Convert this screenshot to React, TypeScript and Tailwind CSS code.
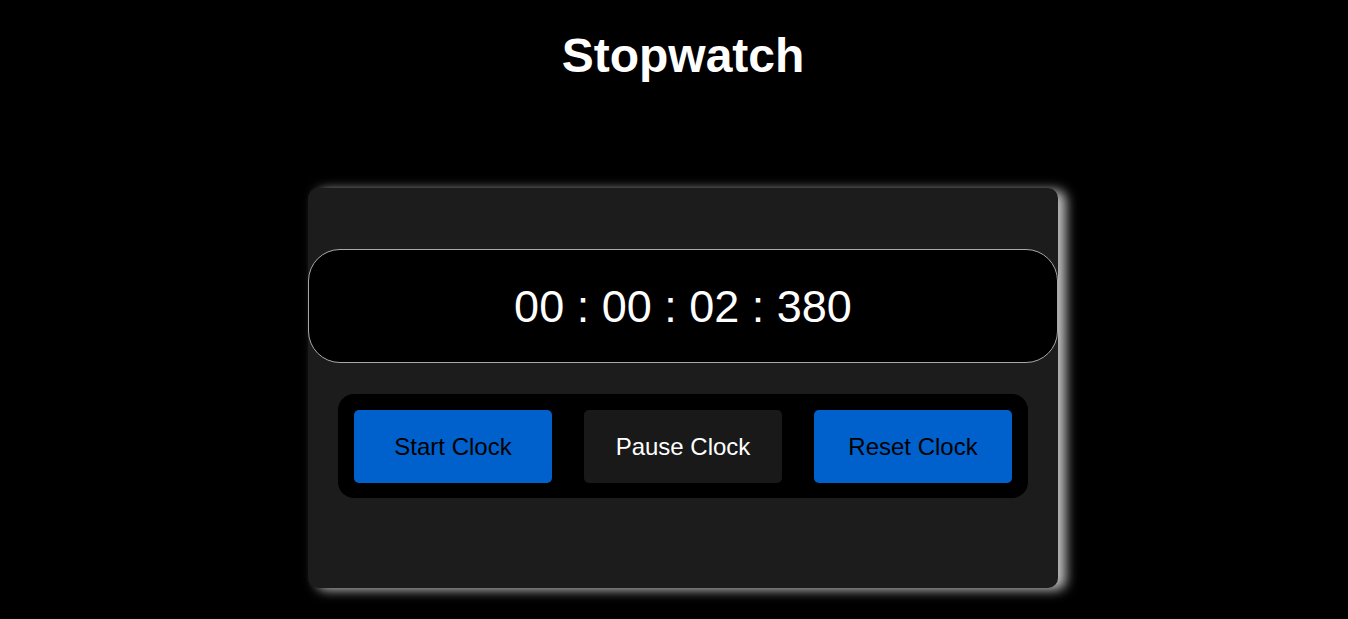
export default function App() {
  const buttons = [
    { label: "Start Clock", cls: "bg-[#0060cc] text-black" },
    { label: "Pause Clock", cls: "bg-[#191919] text-white" },
    { label: "Reset Clock", cls: "bg-[#0060cc] text-black" },
  ];

  return (
    <div className="min-h-[619px] bg-black pl-[18px] font-['Liberation_Sans',Arial,sans-serif] text-white flex flex-col items-center">
      <h1 className="mt-[28px] text-[48px] font-bold leading-[55px]">Stopwatch</h1>

      <div className="mt-[105px] w-[750px] h-[400px] rounded-[10px] bg-[#1c1c1c] pt-[61px] shadow-[8px_2px_12px_rgba(255,255,255,0.75)] flex flex-col items-center">
        <div className="w-full h-[114px] rounded-[32px] border border-[#a8a8a8] bg-black flex items-center justify-center">
          <span className="text-[45px] leading-none">00 : 00 : 02 : 380</span>
        </div>

        <div className="mt-[31px] w-[690px] h-[104px] rounded-[16px] bg-black px-4 pt-4 flex gap-8">
          {buttons.map((b) => (
            <button
              key={b.label}
              className={`w-[198px] h-[73px] rounded-[5px] text-[24px] flex items-center justify-center ${b.cls}`}
            >
              {b.label}
            </button>
          ))}
        </div>
      </div>
    </div>
  );
}
